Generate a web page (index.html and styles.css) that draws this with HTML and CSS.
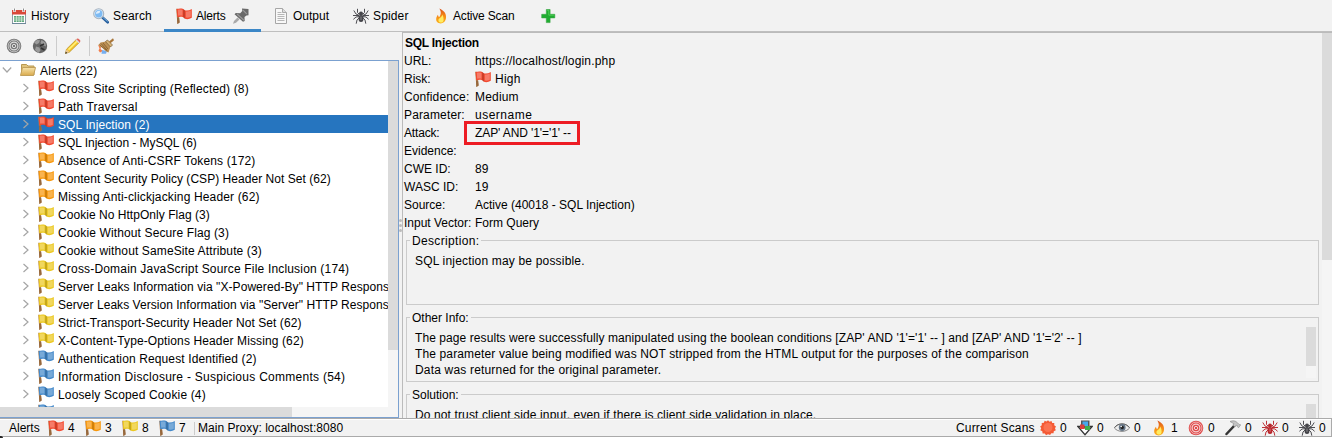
FILE: index.html
```
<!DOCTYPE html>
<html lang="en">
<head>
<meta charset="utf-8">
<title>Alerts</title>
<link rel="stylesheet" href="styles.css">
</head>
<body>
<svg class="defs" width="0" height="0" aria-hidden="true">
  <defs>
    <linearGradient id="gold" x1="0" y1="0" x2="0" y2="1"><stop offset="0" stop-color="#f7e3ab"/><stop offset="1" stop-color="#d9aa4c"/></linearGradient>
    <linearGradient id="fire" x1="0" y1="0" x2="0" y2="1"><stop offset="0" stop-color="#d8501c"/><stop offset=".5" stop-color="#f68a16"/><stop offset="1" stop-color="#fbb51e"/></linearGradient>
    <symbol id="flag" viewBox="0 0 16 16">
      <path d="M.2.800h1.500L3.600 14.500 1.400 15.900Z" fill="#b58152"/>
      <path d="M1 9.500h2.200l.4 5-2.200 1.400Z" fill="#96683d"/>
      <path d="M.6.900C3 .3 5.400.2 7.300.9L8.800 2.300c2.400.5 4.700.1 7-1.300v8.700c-2.200 1.400-4.500 1.800-6.900 1.100L7.200 9.200C5.400 8.500 3.400 8.600 1.300 9.300Z" fill="currentColor"/>
      <path d="M1.800 1.800c1.700-.4 3.300-.4 4.700.1v5.800c-1.500-.4-2.900-.4-4.300 0ZM9.800 3.400c1.700.2 3.400-.1 5-.9v6.200c-1.600.9-3.200 1.200-5 .9Z" fill="#fff" opacity=".28"/>
      <path d="M7.300.9 8.800 2.300v8.500L7.200 9.200Z" fill="#000" opacity=".2"/>
    </symbol>
    <symbol id="spider" viewBox="0 0 16 16">
      <g fill="none" stroke="currentColor" stroke-width=".95"><path d="M6.500 6.500 4.500 4.500V.8M9.500 6.500l2-2V.8M6.500 7.500 3 6 .8 2.500M9.500 7.500 13 6l2.200-3.500M6.500 8.500 3 9l-2.600 2.300M9.500 8.500 13 9l2.600 2.300M6.500 9.500 4 12l-.8 3.700M9.500 9.500 12 12l.8 3.700M0 7.500h6M10 7.500h6"/></g>
      <ellipse cx="8" cy="10.500" rx="2.500" ry="3.500" fill="currentColor"/><circle cx="8" cy="5.500" r="2" fill="currentColor"/>
      <path d="M7.200 9.200h1.600M7 11h2" stroke="#fff" stroke-width=".7" opacity=".5"/>
    </symbol>
    <symbol id="flame" viewBox="0 0 16 16">
      <path d="M6.300.4c4.500 2 7.300 5 6.700 9.700-.4 3.300-2.700 5.400-5.300 5.400-2.900 0-4.800-2-4.500-4.700.2-1.700 1-2.900 1.800-4 .1 1.300.5 2 1.200 2.400C8 6.700 8.600 3.800 6.300.4Z" fill="url(#fire)"/>
      <path d="M9.200 6.500c.1 1.900-1.600 2.900-3 4.100-.7.700-1 1.600-.6 2.500.4 1 1.300 1.600 2.400 1.500 1.700-.1 2.700-1.400 2.600-3.200-.1-1.900-.4-3.300-1.400-4.900Z" fill="#ffec62"/>
    </symbol>
    <symbol id="target" viewBox="0 0 16 16">
      <circle cx="8" cy="8" r="7.300" fill="currentColor"/><circle cx="8" cy="8" r="5.900" fill="none" stroke="#fff" stroke-width=".9" opacity=".6"/><circle cx="8" cy="8" r="3.900" fill="none" stroke="#fff" stroke-width="1.200" opacity=".75"/><circle cx="8" cy="8" r="1.700" fill="none" stroke="#fff" stroke-width="1" opacity=".75"/>
    </symbol>
    <symbol id="calendar" viewBox="0 0 16 16">
      <path d="M1.500 2.500h13v13h-13Z" fill="#fff" stroke="#8d9ba5"/><path d="M1 2h14v4.500H1Z" fill="#d9493a"/><path d="M3.500.5V4M12.500.5V4" stroke="#fff" stroke-width="2.400"/><path d="M3.500.5v3M12.500.5v3" stroke="#8c8c8c"/>
      <path d="M3 8h10v6H3Z" fill="#5fa77c"/><path d="M3 10h10M3 12h10M5.500 8v6M8 8v6M10.500 8v6" stroke="#dceee0" stroke-width=".7"/><path d="M1 15.500h14" stroke="#6c8799"/>
    </symbol>
    <symbol id="lens" viewBox="0 0 16 16">
      <path d="m9.500 9.500 5.200 4.800" stroke="#245d9c" stroke-width="2.600" stroke-linecap="round"/><path d="m10 9.500 4.500 4" stroke="#75addc" stroke-width="1"/>
      <circle cx="5.700" cy="5.700" r="5" fill="#d7eafa" stroke="#a9b4c0" stroke-width="1.100"/><circle cx="5.700" cy="5.700" r="3.700" fill="#7dbaf3"/><path d="M2.800 5.800C3 3.500 5 2.500 7 3c.5 1.800-1.500 3-4.200 2.800Z" fill="#fff" opacity=".75"/>
    </symbol>
    <symbol id="pin" viewBox="0 0 16 16">
      <path d="M0 15.800 1 13l3.500-3.500 2 2L3 14.800Z" fill="#aaa"/><path d="M9 .5 15.500 1v6.300l-2 .2-2 1.500.2 4-1.700.8L1.500 6.300 2.800 5l4.400.2L9.300 3Z" fill="#696969"/><path d="m10 2.200 3.700 3.700M4 6l7 6.300" stroke="#999" stroke-width="1.200"/>
    </symbol>
    <symbol id="page" viewBox="0 0 16 16"><path d="M2.500.5h7l4 4v11h-11Z" fill="#f8f8f8" stroke="#a6a6a6"/><path d="M9.500.5v4h4" fill="#ddd" stroke="#aaa"/><path d="M4.500 4.500h4M4.500 6.500h7M4.500 8.500h7M4.500 10.500h7M4.500 12.500h7" stroke="#b7b7b7"/></symbol>
    <symbol id="plus" viewBox="0 0 16 16"><path d="M6.300 1.500h3.800v4.800h4.700v3.600h-4.700v4.700H6.300V9.900H1.700V6.300h4.600Z" fill="#20ad31" stroke="#35a442" stroke-width=".6"/><path d="M7.300 2.500h1.500v4.700h5" fill="none" stroke="#60dc62" opacity=".7"/></symbol>
    <symbol id="globe" viewBox="0 0 16 16"><circle cx="8" cy="8" r="7.200" fill="#656565"/><path d="M2 4.500 5 2l3 .3-1 2.800-2.500 1.500ZM9.500 2l4 2.500.5 4-2.700-1.300L8.500 5ZM4 8.500l3.500 1 1 3L6.500 15 3 12Z" fill="#9b9b9b"/><path d="m8 8 4-2M9 10l3.500 2" stroke="#333" stroke-width="1.500"/></symbol>
    <symbol id="pencil" viewBox="0 0 16 16"><path d="m.4 15.500 1.100-4.300L11.300 1.500l3 3L4.500 14Z" fill="#f6c52f" stroke="#b28616" stroke-width=".7"/><path d="m3 11 8.500-8.300 1 1L4 12.200Z" fill="#fff179"/><path d="m11 1.800 1.300-1.300c.7-.7 3.800 1.800 3 3l-1.400 1.300Z" fill="#e3665e"/><path d="m10.500 2.300 3 3 1-1-3-3Z" fill="#ddd"/><path d="m.4 15.500 1.100-4.300 3 2.800Z" fill="#ebc690"/><path d="m.3 15.700.5-2 1.500 1.400Z" fill="#222"/></symbol>
    <symbol id="broom" viewBox="0 0 16 16"><path d="M0 6.500 3 9l-.5 2L5 13l-3 1.500L.5 12.500l1-2Z" fill="#f47c49"/><path d="m4 12 5 1-1 2.800H3.500Z" fill="#75aef0"/><path d="m2.500 4.500 5.500-1 4.500 5-2 6-3-1.500L5 10.500.500 7Z" fill="#bd9154"/><path d="m3 5.500 6 6.500M5 5l5 6M1.500 7l8 6" stroke="#805b29" stroke-width=".8"/><path d="m7.500 3.500 2-1.500 5 5-2 2Z" fill="#d5b376" stroke="#795b32" stroke-width=".7"/><path d="m11 3.500 4-3.200 1 2-3.500 3Z" fill="#a97639"/></symbol>
    <symbol id="folder" viewBox="0 0 16 16"><path d="M1.500 13V2.500h5L8 4h6v9Z" fill="#dfc37d" stroke="#b9984f"/><path d="M.5 13.500 2.500 5.500h13L13.500 13.500Z" fill="url(#gold)" stroke="#c2a05b"/></symbol>
    <symbol id="burst" viewBox="0 0 16 16"><path d="m8 .2 1.500 1.500 2-.8.700 2 2.100.2-.1 2.200L16 6.500 15 8.300l.8 2-2 .9-.3 2.100-2.200 0-1.200 1.800L8 14.300l-2 .9-1.200-1.800-2.200 0-.3-2.200-2-.9.9-2L.1 6.500l1.700-1.300-.1-2.200 2.200-.2.700-2 2 .8Z" fill="#f45a35"/><circle cx="8" cy="7.500" r="4.500" fill="#ff8061" opacity=".65"/></symbol>
    <symbol id="download" viewBox="0 0 16 16"><path d="M3.500 6.500H.8L8 14.800l7.200-8.300h-2.700" fill="#fff" stroke="#333" stroke-width="1.300"/><path d="M4 .5h8.500v8H4Z" fill="#555"/><path d="M5.500 1.500H11V6H5.500Z" fill="#45a9ed"/><path d="M3 4.500h4.500V9H3Z" fill="#db3f3b"/><path d="M8 6h5v4H8Z" fill="#41ae4a"/></symbol>
    <symbol id="eye" viewBox="0 0 16 16"><path d="M.4 8C4 2.500 12 2.500 15.600 8 12 12.500 4 12.500.4 8Z" fill="#eee" stroke="#888"/><path d="M.5 7.500C4 2.700 12 2.700 15.500 7.500" fill="none" stroke="#666"/><circle cx="8.200" cy="7.500" r="3.400" fill="#657586"/><circle cx="8.200" cy="7.500" r="1.700" fill="#222"/><circle cx="7.200" cy="6.500" r=".8" fill="#fff"/></symbol>
    <symbol id="hammer" viewBox="0 0 16 16"><path d="m1.500 14 8-8.500" stroke="#333" stroke-width="2.500" stroke-linecap="round"/><path d="M5 1.500c3-1.300 5.500-.8 7.500 1.300l1.700 1.700 1.500.3-2.200 3-1-1-.5-1.800L9.500 6.800 7.800 5 9 3.800Z" fill="#c4c4c4" stroke="#888" stroke-width=".6"/></symbol>
    <symbol id="right" viewBox="0 0 8 10"><path d="m1.500 1 4.500 4-4.500 4" fill="none" stroke="#a5a5a5" stroke-width="1.200"/></symbol>
    <symbol id="down" viewBox="0 0 10 8"><path d="m.8 1.500 4.200 4.500 4.200-4.500" fill="none" stroke="#a5a5a5" stroke-width="1.200"/></symbol>
  </defs>
</svg>
<div class="app">
  <nav class="tabs">
    <div class="tab history"><svg class="icon"><use href="#calendar"/></svg><span class="ls15">History</span></div>
    <div class="tab search"><svg class="icon"><use href="#lens"/></svg><span class="ls15">Search</span></div>
    <div class="tab alerts active"><svg class="icon red"><use href="#flag"/></svg><span class="tight">Alerts</span><svg class="icon pin"><use href="#pin"/></svg></div>
    <div class="tab output"><svg class="icon"><use href="#page"/></svg><span>Output</span></div>
    <div class="tab crawl"><svg class="icon dark"><use href="#spider"/></svg><span class="ls15">Spider</span></div>
    <div class="tab scan"><svg class="icon"><use href="#flame"/></svg><span class="tight">Active Scan</span></div>
    <div class="tab add"><svg class="icon"><use href="#plus"/></svg></div>
  </nav>
  <main class="workspace">
    <section class="left">
      <div class="toolbar"><svg class="icon gray"><use href="#target"/></svg><svg class="icon"><use href="#globe"/></svg><i class="rule"></i><svg class="icon"><use href="#pencil"/></svg><i class="rule"></i><svg class="icon"><use href="#broom"/></svg></div>
      <div class="tree">
        <div class="rows">
          <div class="row root"><svg class="down"><use href="#down"/></svg><svg class="icon"><use href="#folder"/></svg><span class="ls18">Alerts (22)</span></div>
          <div class="row"><svg class="chev"><use href="#right"/></svg><svg class="icon red"><use href="#flag"/></svg><span class="ls15">Cross Site Scripting (Reflected) (8)</span></div>
          <div class="row"><svg class="chev"><use href="#right"/></svg><svg class="icon red"><use href="#flag"/></svg><span class="ls15">Path Traversal</span></div>
          <div class="row selected"><svg class="chev"><use href="#right"/></svg><svg class="icon red"><use href="#flag"/></svg><span class="ls12">SQL Injection (2)</span></div>
          <div class="row"><svg class="chev"><use href="#right"/></svg><svg class="icon red"><use href="#flag"/></svg><span class="lsm4">SQL Injection - MySQL (6)</span></div>
          <div class="row"><svg class="chev"><use href="#right"/></svg><svg class="icon orange"><use href="#flag"/></svg><span class="ls15">Absence of Anti-CSRF Tokens (172)</span></div>
          <div class="row"><svg class="chev"><use href="#right"/></svg><svg class="icon orange"><use href="#flag"/></svg><span class="ls4">Content Security Policy (CSP) Header Not Set (62)</span></div>
          <div class="row"><svg class="chev"><use href="#right"/></svg><svg class="icon orange"><use href="#flag"/></svg><span class="ls15">Missing Anti-clickjacking Header (62)</span></div>
          <div class="row"><svg class="chev"><use href="#right"/></svg><svg class="icon yellow"><use href="#flag"/></svg><span class="ls4">Cookie No HttpOnly Flag (3)</span></div>
          <div class="row"><svg class="chev"><use href="#right"/></svg><svg class="icon yellow"><use href="#flag"/></svg><span class="ls12">Cookie Without Secure Flag (3)</span></div>
          <div class="row"><svg class="chev"><use href="#right"/></svg><svg class="icon yellow"><use href="#flag"/></svg><span class="ls12">Cookie without SameSite Attribute (3)</span></div>
          <div class="row"><svg class="chev"><use href="#right"/></svg><svg class="icon yellow"><use href="#flag"/></svg><span class="ls18">Cross-Domain JavaScript Source File Inclusion (174)</span></div>
          <div class="row"><svg class="chev"><use href="#right"/></svg><svg class="icon yellow"><use href="#flag"/></svg><span class="ls7">Server Leaks Information via "X-Powered-By" HTTP Respons</span></div>
          <div class="row"><svg class="chev"><use href="#right"/></svg><svg class="icon yellow"><use href="#flag"/></svg><span class="ls4">Server Leaks Version Information via "Server" HTTP Respons</span></div>
          <div class="row"><svg class="chev"><use href="#right"/></svg><svg class="icon yellow"><use href="#flag"/></svg><span class="ls7">Strict-Transport-Security Header Not Set (62)</span></div>
          <div class="row"><svg class="chev"><use href="#right"/></svg><svg class="icon yellow"><use href="#flag"/></svg><span class="ls12">X-Content-Type-Options Header Missing (62)</span></div>
          <div class="row"><svg class="chev"><use href="#right"/></svg><svg class="icon blue"><use href="#flag"/></svg><span class="ls12">Authentication Request Identified (2)</span></div>
          <div class="row"><svg class="chev"><use href="#right"/></svg><svg class="icon blue"><use href="#flag"/></svg><span class="ls27">Information Disclosure - Suspicious Comments (54)</span></div>
          <div class="row"><svg class="chev"><use href="#right"/></svg><svg class="icon blue"><use href="#flag"/></svg><span class="ls15">Loosely Scoped Cookie (4)</span></div>
          <div class="row"><svg class="chev"></svg><svg class="icon blue"><use href="#flag"/></svg></div>
        </div>
        <div class="vbar"><i></i></div>
        <div class="hbar"><i></i></div>
      </div>
    </section>
    <div class="splitter"><i></i><i></i><i></i></div>
    <section class="details">
      <div class="content">
        <h1>SQL Injection</h1>
        <dl>
          <dt>URL:</dt><dd class="ls18">https://localhost/login.php</dd>
          <dt>Risk:</dt><dd><svg class="icon red"><use href="#flag"/></svg><span class="ls27">High</span></dd>
          <dt class="ls12">Confidence:</dt><dd class="ls18">Medium</dd>
          <dt class="ls15">Parameter:</dt><dd class="ls50">username</dd>
          <dt class="tight">Attack:</dt><dd class="attack lsm10">ZAP' AND '1'='1' --</dd>
          <dt>Evidence:</dt><dd></dd>
          <dt>CWE ID:</dt><dd>89</dd>
          <dt>WASC ID:</dt><dd>19</dd>
          <dt>Source:</dt><dd>Active (40018 - SQL Injection)</dd>
          <dt>Input Vector:</dt><dd>Form Query</dd>
        </dl>
        <div class="group"><h2 class="ls33">Description:</h2><div class="box"><p class="ls18">SQL injection may be possible.</p></div></div>
        <div class="group"><h2>Other Info:</h2><div class="box"><p class="ls8">The page results were successfully manipulated using the boolean conditions [ZAP' AND '1'='1' -- ] and [ZAP' AND '1'='2' -- ]</p><p class="ls13">The parameter value being modified was NOT stripped from the HTML output for the purposes of the comparison</p><p class="ls18">Data was returned for the original parameter.</p><div class="mini"><i></i></div></div></div>
        <div class="group"><h2>Solution:</h2><div class="box"><p class="ls12">Do not trust client side input, even if there is client side validation in place.</p><div class="mini"><i></i></div></div></div>
      </div>
      <div class="vbar"><i></i></div>
    </section>
  </main>
  <footer class="status">
    <span class="label">Alerts</span>
    <div class="count"><svg class="icon red"><use href="#flag"/></svg>4</div><div class="count"><svg class="icon orange"><use href="#flag"/></svg>3</div><div class="count"><svg class="icon yellow"><use href="#flag"/></svg>8</div><div class="count"><svg class="icon blue"><use href="#flag"/></svg>7</div>
    <span class="proxy ls4">Main Proxy: localhost:8080</span>
    <span class="scans ls15">Current Scans</span>
    <div class="count"><svg class="icon"><use href="#burst"/></svg>0</div><div class="count"><svg class="icon"><use href="#download"/></svg>0</div><div class="count"><svg class="icon"><use href="#eye"/></svg>0</div><div class="count"><svg class="icon"><use href="#flame"/></svg>1</div><div class="count"><svg class="icon rose"><use href="#target"/></svg>0</div><div class="count"><svg class="icon"><use href="#hammer"/></svg>0</div><div class="count"><svg class="icon crimson"><use href="#spider"/></svg>0</div><div class="count"><svg class="icon dark"><use href="#spider"/></svg>0</div>
  </footer>
</div>
</body>
</html>
```
FILE: styles.css
```
*, *::after { box-sizing: border-box; }
body { margin: 0; overflow: hidden; background: #f2f2f2; color: #000; font: 12px/18px "Liberation Sans", Arial, sans-serif; }
h1, h2, p, dl, dd { margin: 0; font-size: 12px; }
.defs { position: absolute; }
.app { height: 438px; display: flex; flex-direction: column; }
.icon { width: 16px; height: 16px; flex: none; display: block; }
/* colours */
.red { color: #f3492f; }
.orange { color: #f8980c; }
.yellow { color: #ecc820; }
.blue { color: #4489ca; }
.dark { color: #45454a; }
.gray { color: #777; }
.rose { color: #df4a4a; }
.crimson { color: #b9262b; }
/* tracking */
.tight { letter-spacing: -.18px; }
.lsm10 { letter-spacing: -.1px; }
.lsm4 { letter-spacing: -.04px; }
.ls4 { letter-spacing: .04px; }
.ls7 { letter-spacing: .07px; }
.ls8 { letter-spacing: .08px; }
.ls12 { letter-spacing: .12px; }
.ls13 { letter-spacing: .132px; }
.ls15 { letter-spacing: .15px; }
.ls18 { letter-spacing: .18px; }
.ls27 { letter-spacing: .27px; }
.ls33 { letter-spacing: .33px; }
.ls50 { letter-spacing: .5px; }
.tabs { height: 32px; flex: none; display: flex; border-bottom: 1px solid #bfbfbf; }
.tab { height: 32px; padding: 0 0 1px 12px; display: flex; align-items: center; gap: 4px; white-space: nowrap; }
.history { width: 81px; padding-left: 11px; }
.search { width: 83px; }
.alerts { width: 97px; border-bottom: 3px solid #3c87c7; padding-bottom: 0; padding-top: 2px; }
.pin { margin-left: 3px; }
.output { width: 80px; }
.crawl { width: 80px; }
.scan { width: 107px; }
.workspace { height: 386px; flex: none; display: flex; }
.left { width: 399px; display: flex; flex-direction: column; }
.toolbar { height: 28px; flex: none; display: flex; align-items: center; padding-left: 6px; }
.toolbar .icon { margin-right: 10px; }
.toolbar .rule { width: 1px; height: 20px; background: #ccc; margin-right: 8px; margin-left: -2px; }
.tree { height: 358px; display: grid; grid-template: 346px 10px / 388px 10px; border: solid #7ba1d0; border-width: 1px 1px 1px 0; background: #fff; }
.rows { overflow: hidden; }
.row { height: 18px; padding-left: 22px; display: flex; align-items: center; white-space: nowrap; }
.row span { margin-top: 2px; }
.row .chev { width: 8px; height: 10px; margin-right: 8px; flex: none; }
.row .icon { margin-right: 4px; }
.row.root { padding-left: 2px; }
.down { width: 10px; height: 8px; margin-right: 8px; }
.selected { background: #2675bf; color: #fff; }
.vbar { width: 10px; background: #f5f5f5; }
.vbar i { display: block; height: 289px; background: #dbdbdb; }
.hbar { grid-column: 1 / 3; background: #f5f5f5; }
.hbar i { display: block; width: 292px; height: 10px; background: #dbdbdb; }
.splitter { width: 3px; display: flex; flex-direction: column; justify-content: center; align-items: center; gap: 2px; }
.splitter i { width: 3px; height: 3px; border-radius: 50%; background: #bbb; }
.details { width: 930px; display: flex; border: solid #bbb; border-width: 1px 0 0 1px; overflow: hidden; }
.content { width: 919px; padding: 1px 3px 0 1px; }
.details .vbar i { height: 227px; }
h1 { height: 18px; padding-left: 1px; font-weight: bold; letter-spacing: -.25px; }
dl { display: grid; grid-template-columns: 71px 1fr; grid-auto-rows: 18px; white-space: nowrap; }
dd { display: flex; align-items: center; gap: 4px; }
.attack { position: relative; }
.attack::after { content: ""; position: absolute; left: -11px; top: -3px; width: 116px; height: 24px; border: 3px solid #ed1c24; }
.group { height: 77px; padding-left: 2px; }
h2 { position: relative; width: fit-content; height: 18px; margin: 0 0 -10px 4px; padding: 0 2px; font-weight: normal; background: #f2f2f2; }
.box { height: 65px; width: 913px; padding: 12px 0 0 8px; border: 1px solid #cbcbcb; display: grid; grid-template-columns: 891px 10px; grid-auto-rows: 16px; line-height: 16px; }
.box p { grid-column: 1; white-space: nowrap; }
.mini { grid-column: 2; grid-row: 1 / 4; height: 51px; margin-top: -3px; background: #f5f5f5; }
.mini i { display: block; height: 39px; background: #dbdbdb; }
.status { position: relative; height: 19px; flex: none; display: flex; align-items: center; padding: 1px 4px 0 9px; border: solid #aaa; border-width: 1px 1px 1px 0; box-shadow: inset 0 1px #fff, 0 1px #fff; white-space: nowrap; }
.status::after { content: ""; position: absolute; left: 0; bottom: -2px; width: 3px; height: 2px; background: #222; border-radius: 0 2px 0 0; }
.label { width: 39px; }
.count { width: 37px; display: flex; align-items: center; gap: 4px; }
.proxy { padding-left: 3px; border-left: 1px solid #ccc; line-height: 13px; margin-left: -2px; }
.scans { margin-left: auto; width: 84px; }
.status .count:last-child { width: 28px; }
```
